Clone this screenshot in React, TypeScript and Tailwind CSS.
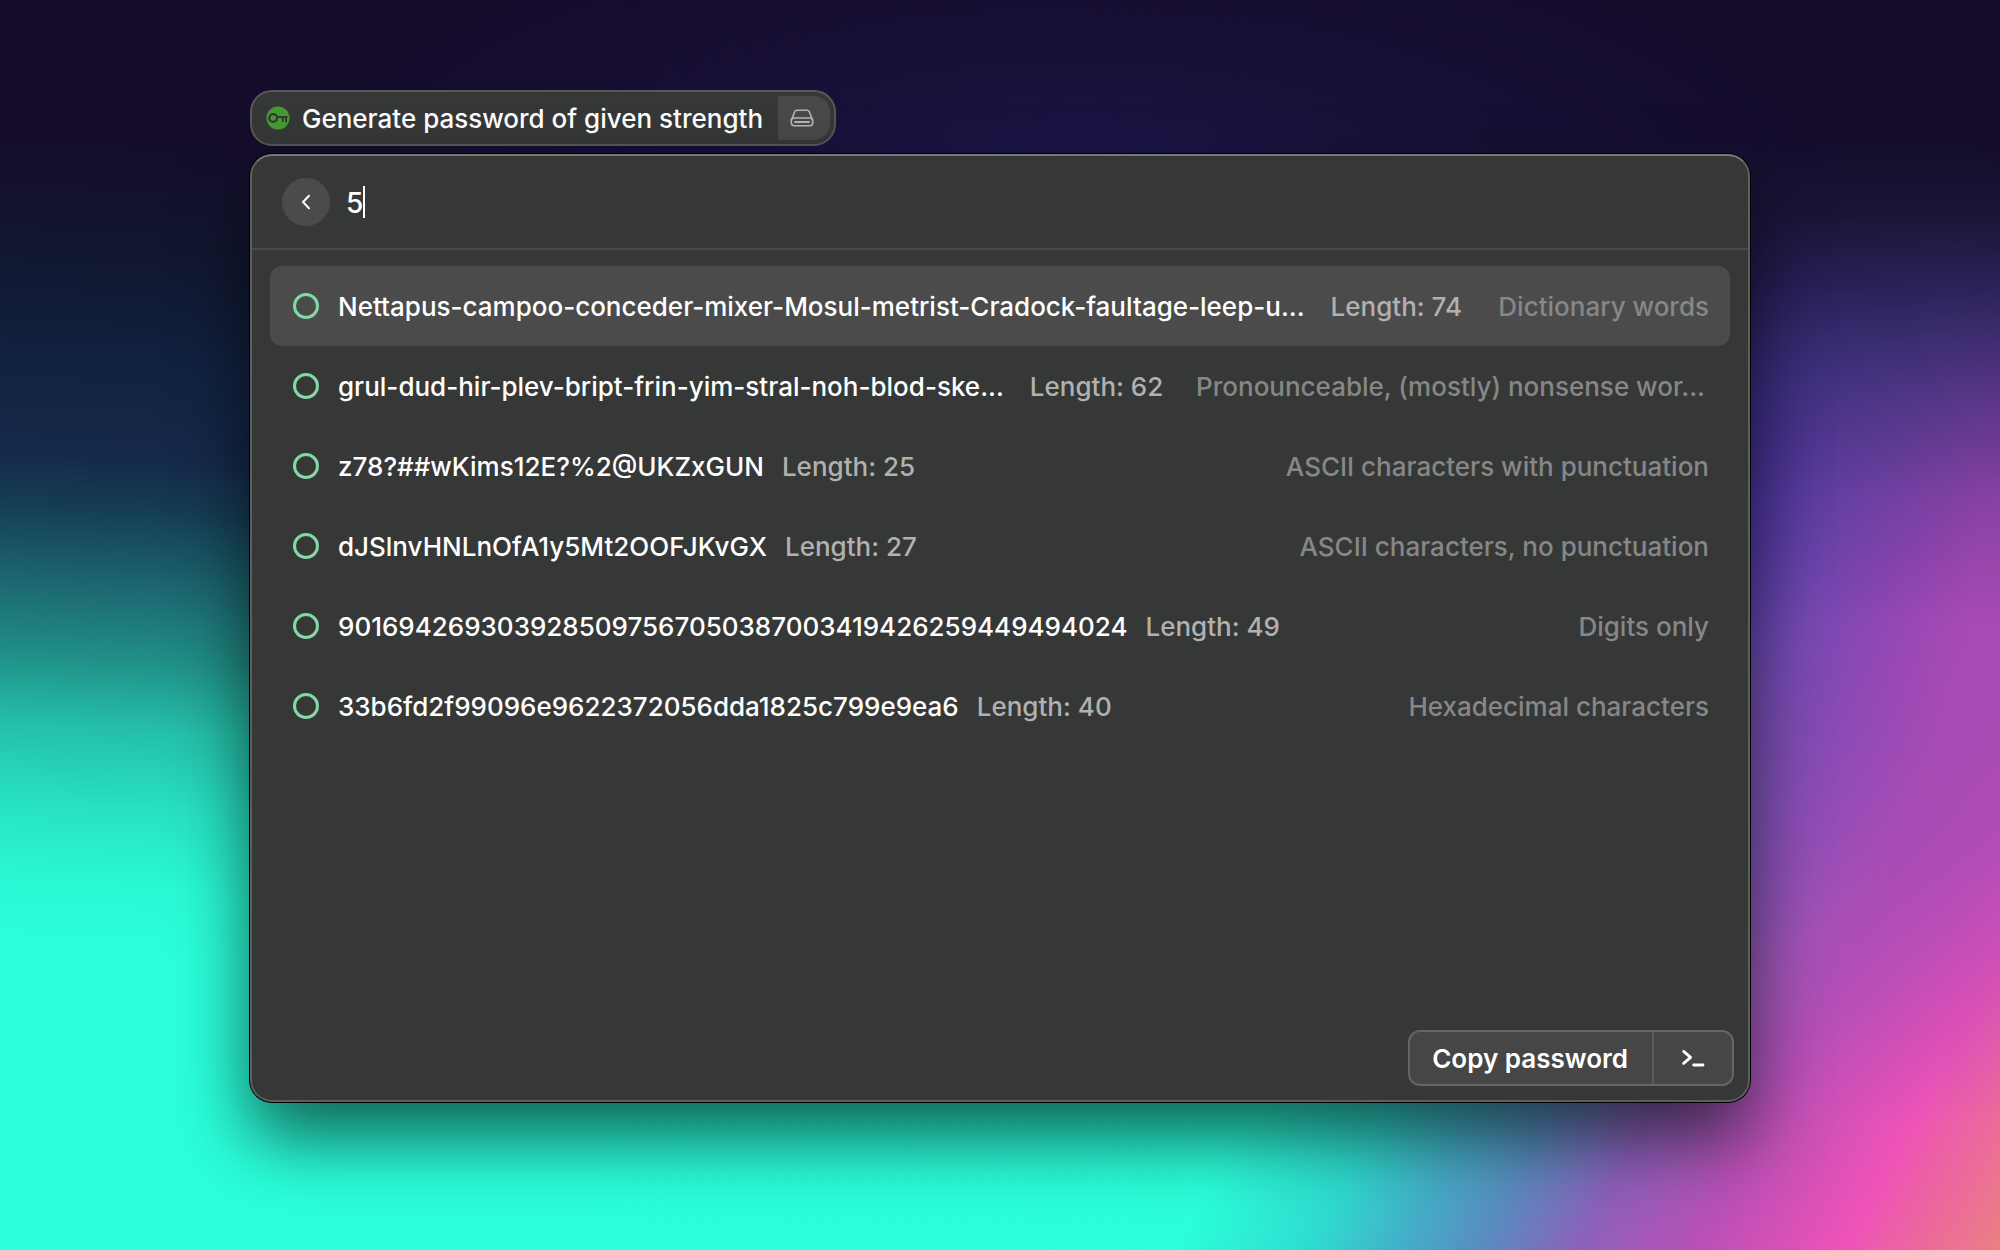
import { useState } from "react";

type Password = {
  value: string;
  length: number;
  kind: string;
};

const passwords: Password[] = [
  {
    value: "Nettapus-campoo-conceder-mixer-Mosul-metrist-Cradock-faultage-leep-u...",
    length: 74,
    kind: "Dictionary words",
  },
  {
    value: "grul-dud-hir-plev-bript-frin-yim-stral-noh-blod-ske...",
    length: 62,
    kind: "Pronounceable, (mostly) nonsense wor...",
  },
  { value: "z78?##wKims12E?%2@UKZxGUN", length: 25, kind: "ASCII characters with punctuation" },
  { value: "dJSlnvHNLnOfA1y5Mt2OOFJKvGX", length: 27, kind: "ASCII characters, no punctuation" },
  { value: "9016942693039285097567050387003419426259449494024", length: 49, kind: "Digits only" },
  { value: "33b6fd2f99096e9622372056dda1825c799e9ea6", length: 40, kind: "Hexadecimal characters" },
];

function KeyBadge() {
  return (
    <svg viewBox="0 0 24 24" className="size-6 shrink-0" aria-hidden="true">
      <circle cx="12" cy="12" r="11.5" fill="#459a31" />
      <circle cx="7.2" cy="12" r="3.9" fill="none" stroke="#343a33" strokeWidth="2.2" />
      <path d="M11 11h10.6M16.8 11v4.8M20 11v5.4" fill="none" stroke="#343a33" strokeWidth="2" />
    </svg>
  );
}

function DriveIcon() {
  return (
    <svg viewBox="0 0 24 18" className="h-[18px] w-6" fill="none" stroke="#b4b5b4" strokeWidth="1.6" strokeLinejoin="round" strokeLinecap="round" aria-hidden="true">
      <path d="M1.6 10.6 4.6 3Q5.3 1.2 7.2 1.2h9.6q1.9 0 2.6 1.8l3 7.6" />
      <rect x="1.2" y="9" width="21.6" height="7.8" rx="3.2" />
      <path d="M5 13h14" strokeWidth="1.8" />
    </svg>
  );
}

function ChevronLeft() {
  return (
    <svg viewBox="0 0 10 16" className="h-4 w-[10px]" fill="none" stroke="#ffffff" strokeWidth="2" strokeLinecap="round" strokeLinejoin="round" aria-hidden="true">
      <path d="M8 1.8 2 8l6 6.2" />
    </svg>
  );
}

function PromptIcon() {
  return (
    <svg viewBox="0 0 24 18" className="h-[18px] w-6" fill="none" stroke="#ffffff" strokeWidth="2.8" strokeLinecap="round" strokeLinejoin="round" aria-hidden="true">
      <path d="m2.6 2.4 7 6-7 6M12.6 16h9.4" />
    </svg>
  );
}

function Wallpaper() {
  return (
    <div
      aria-hidden="true"
      className="absolute inset-0 -z-10 bg-[linear-gradient(118deg,#2bffdb_69%,#2fdcd0_74%,#44aec8_77.5%,#5a8cc0_80.5%,#8a62bb_84%,#b850b6_88.5%,#ee52b8_94%,#ea8080_100%)]"
    >
      <div className="absolute inset-0 bg-[radial-gradient(ellipse_20%_40%_at_96%_50%,#a84ab5_10%,#a44ab6bb_45%,#a44ab600_100%)]" />
      <div className="absolute inset-0 bg-[radial-gradient(ellipse_14%_42%_at_85%_36%,#4c37a8_15%,#5e42b099_50%,#5e42b000_100%)]" />
      <div className="absolute inset-0 bg-[linear-gradient(180deg,#140b2a_11%,#170e2ef2_17%,#20154add_23%,#2b1c6099_31%,#3a207044_40%,#3a207000_50%)]" />
      <div className="absolute inset-0 bg-[linear-gradient(183deg,#150b2b_17%,#111730_26%,#112240_34%,#15294a_41%,#153e55_45%,#1d6a72_51%,#209087_56%,#25bfa9_61%,#27e2c2_67%,#2afad5_73%,#2bffdb_78%)] mask-[linear-gradient(90deg,black_30%,transparent_62%)]" />
      <div className="absolute inset-0 bg-[radial-gradient(ellipse_40%_24%_at_54%_16%,#1d1850_0%,#1a144099_45%,#1a144000_100%)]" />
    </div>
  );
}

export default function App() {
  const [level, setLevel] = useState("5");
  const [selected, setSelected] = useState(0);

  return (
    <main className="relative isolate flex min-h-screen flex-col items-stretch gap-2 overflow-hidden px-[12.5%] pt-[90px] pb-[148px] font-['Inter',sans-serif] text-[26px] leading-8 font-medium text-white">
      <Wallpaper />

      <div className="flex h-14 items-center self-start rounded-[22px] border-2 border-[#575857] bg-[#363837] pr-1 pl-3.5">
        <KeyBadge />
        <h1 className="ml-3 pt-0.5 whitespace-nowrap">Generate password of given strength</h1>
        <button type="button" aria-label="Stored locally" className="ml-[15px] flex h-11 w-[52px] items-center justify-center rounded-r-2xl bg-[#484948] pr-1">
          <DriveIcon />
        </button>
      </div>

      <section className="flex flex-1 flex-col rounded-[22px] border-2 border-[#5d5f5e] border-t-[#777978] bg-[#363837] shadow-[0_0_0_1px_#000,0_36px_72px_rgba(0,0,0,0.62)]">
        <header className="flex h-[94px] items-center gap-4 border-b-2 border-[#4a4b4a] px-[30px]">
          <button type="button" aria-label="Back" className="flex size-12 items-center justify-center rounded-full bg-[#4b4b4b]">
            <ChevronLeft />
          </button>
          <label className="flex items-center text-[28px]">
            <input
              aria-label="Password strength"
              value={level}
              onChange={(e) => setLevel(e.target.value)}
              className="field-sizing-content bg-transparent pt-0.5 caret-transparent outline-none"
            />
            <span aria-hidden="true" className="h-8 w-0.5 bg-white" />
          </label>
        </header>

        <ul className="px-[18px] pt-4">
          {passwords.map((p, i) => (
            <li key={p.value}>
              <button
                type="button"
                onClick={() => setSelected(i)}
                className={
                  "flex h-20 w-full items-center rounded-xl pr-[21px] pl-[23px] text-left whitespace-nowrap " +
                  (i === selected ? "bg-[#4b4b4b]" : "")
                }
              >
                <span className="size-[26px] shrink-0 rounded-full border-[3px] border-[#83d9a4]" />
                <span className="ml-[19px] pt-0.5">{p.value}</span>
                <span className={"pt-0.5 text-[#b0b1b0] " + (p.value.endsWith("...") ? "ml-[26px]" : "ml-[18px]")}>
                  Length: {p.length}
                </span>
                <span className={"ml-auto pt-0.5 text-[#868786] " + (p.kind.endsWith("...") ? "pr-1" : "")}>{p.kind}</span>
              </button>
            </li>
          ))}
        </ul>

        <footer className="mt-auto flex justify-end p-3.5">
          <div className="flex h-14 items-stretch divide-x-2 divide-[#5c5d5c] rounded-xl border-2 border-[#646564] bg-[#454645]">
            <button type="button" className="pt-0.5 pr-6 pl-[22px] font-semibold">
              Copy password
            </button>
            <button type="button" aria-label="More actions" className="flex w-[78px] items-center justify-center">
              <PromptIcon />
            </button>
          </div>
        </footer>
      </section>
    </main>
  );
}
